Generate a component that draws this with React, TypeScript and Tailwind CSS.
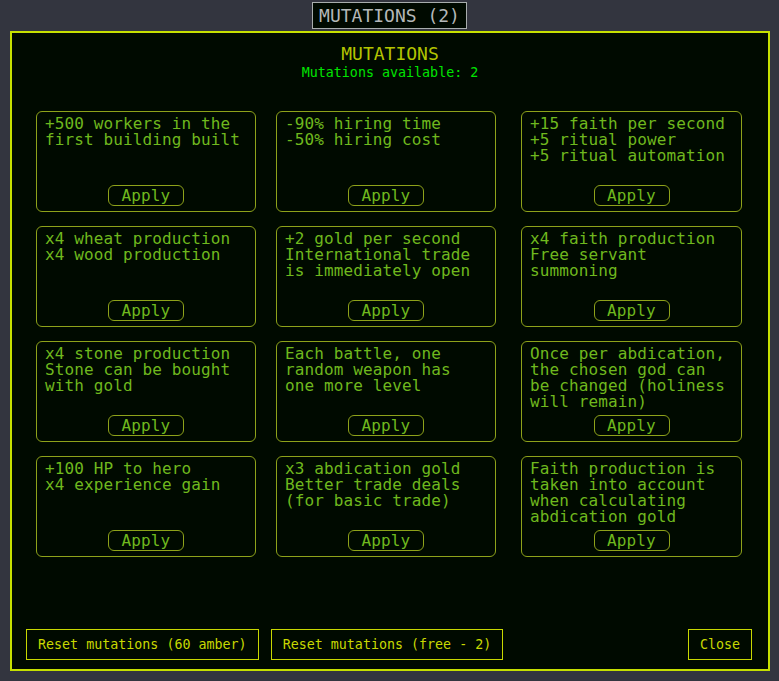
type Mutation = {
  lines: string[];
};

const mutations: Mutation[] = [
  { lines: ["+500 workers in the first building built"] },
  { lines: ["-90% hiring time", "-50% hiring cost"] },
  { lines: ["+15 faith per second", "+5 ritual power", "+5 ritual automation"] },
  { lines: ["x4 wheat production", "x4 wood production"] },
  { lines: ["+2 gold per second", "International trade is immediately open"] },
  { lines: ["x4 faith production", "Free servant summoning"] },
  { lines: ["x4 stone production", "Stone can be bought with gold"] },
  { lines: ["Each battle, one random weapon has one more level"] },
  { lines: ["Once per abdication, the chosen god can be changed (holiness will remain)"] },
  { lines: ["+100 HP to hero", "x4 experience gain"] },
  { lines: ["x3 abdication gold", "Better trade deals (for basic trade)"] },
  { lines: ["Faith production is taken into account when calculating abdication gold"] },
];

const MutationCard = ({ lines, wide }: Mutation & { wide: boolean }) => {
  return (
    <div
      className={`${wide ? "w-[221px]" : "w-[220px]"} h-[101px] border border-[#8ea21a] rounded-md px-2 pt-1 flex flex-col`}
    >
      <div className="text-[16px] leading-4 tracking-[0.12px] text-[#6fb81e]">
        {lines.map((line, i) => (
          <div key={i}>{line}</div>
        ))}
      </div>
      <button className="mt-auto mb-[5px] self-center w-[76px] h-[21px] border border-[#8ea21a] rounded-md text-[16px] leading-[19px] tracking-[0.12px] text-[#6fb81e]">
        Apply
      </button>
    </div>
  );
};

export default function App() {
  return (
    <div className="h-[681px] bg-[#33353f] pt-[2px] font-['DejaVu_Sans_Mono',monospace] overflow-hidden">
      <div className="flex justify-center">
        <div className="border border-[#a8adad] bg-[#000a00] px-1.5 py-[2px] text-[18px] leading-[21px] text-[#b4b8b8]">
          MUTATIONS (2)
        </div>
      </div>

      <div className="mt-[2px] ml-[10px] w-[760px] h-[640px] border-2 border-[#c6e000] bg-[#000a00] flex flex-col pt-[10px]">
        <div className="text-center text-[18px] leading-[21px] text-[#b3c400]">MUTATIONS</div>
        <div className="mt-[1px] text-center text-[13.33px] leading-4 text-[#00e400]">
          Mutations available: 2
        </div>

        <div className="mt-[30px] ml-[24px] grid grid-cols-[240px_245px_221px] gap-y-[14px]">
          {mutations.map((m, i) => (
            <MutationCard key={i} lines={m.lines} wide={i % 3 === 2} />
          ))}
        </div>

        <div className="mt-auto flex items-center pl-[14px] pr-[16px] pb-[9px] text-[13.33px] text-[#c8d800]">
          <button className="h-[31px] px-[11px] border border-[#c8d800]">Reset mutations (60 amber)</button>
          <button className="ml-3 h-[31px] px-[11px] border border-[#c8d800]">Reset mutations (free - 2)</button>
          <button className="ml-auto h-[31px] px-[11px] border border-[#c8d800]">Close</button>
        </div>
      </div>
    </div>
  );
}
